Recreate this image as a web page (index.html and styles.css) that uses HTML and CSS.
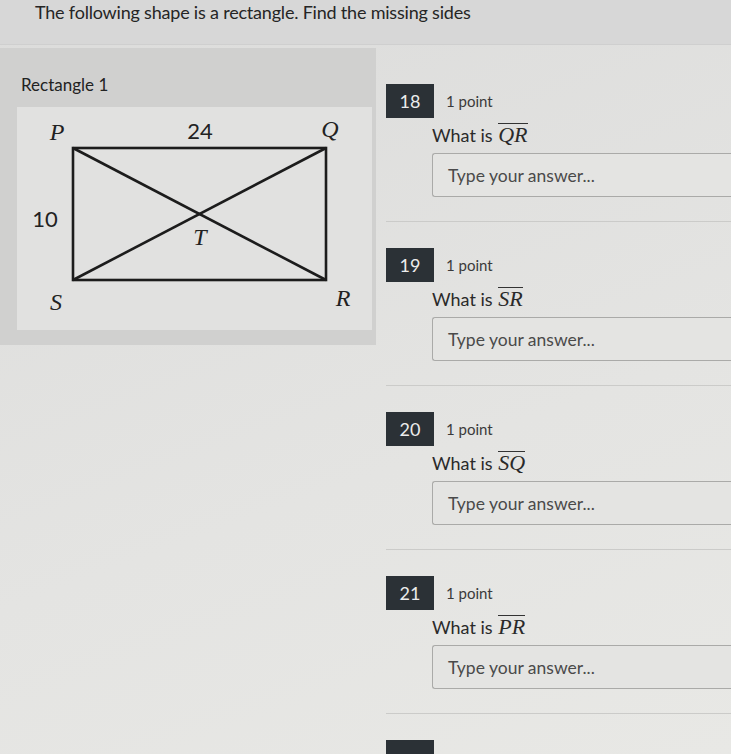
FILE: index.html
```html
<!DOCTYPE html>
<html>
<head>
<meta charset="utf-8">
<link rel="stylesheet" href="styles.css">
</head>
<body>
<header class="top">
  <p class="prompt">The following shape is a rectangle. Find the missing sides</p>
</header>
<main class="layout">
  <section class="left">
    <div class="panel">
      <h2 class="panel-title">Rectangle 1</h2>
      <div class="figure">
        <svg width="355" height="223" viewBox="0 0 355 223">
          <g stroke="#1c1c1c" stroke-width="2.6" fill="none">
            <rect x="56" y="41" width="253" height="132"/>
            <line x1="56" y1="41" x2="309" y2="173"/>
            <line x1="56" y1="173" x2="309" y2="41"/>
          </g>
          <g class="lbl-it">
            <text x="40" y="25">P</text>
            <text x="313" y="22">Q</text>
            <text x="183" y="130">T</text>
            <text x="39" y="195">S</text>
            <text x="326" y="191">R</text>
          </g>
          <g class="lbl-num">
            <text x="183" y="23">24</text>
            <text x="28" y="111">10</text>
          </g>
        </svg>
      </div>
    </div>
  </section>
  <section class="right">
    <div class="q">
      <div class="qhead"><span class="badge">18</span><span class="pts">1 point</span></div>
      <div class="qtext">What is <span class="seg">QR</span></div>
      <div class="answer">Type your answer...</div>
    </div>
    <div class="q">
      <div class="qhead"><span class="badge">19</span><span class="pts">1 point</span></div>
      <div class="qtext">What is <span class="seg">SR</span></div>
      <div class="answer">Type your answer...</div>
    </div>
    <div class="q">
      <div class="qhead"><span class="badge">20</span><span class="pts">1 point</span></div>
      <div class="qtext">What is <span class="seg">SQ</span></div>
      <div class="answer">Type your answer...</div>
    </div>
    <div class="q">
      <div class="qhead"><span class="badge">21</span><span class="pts">1 point</span></div>
      <div class="qtext">What is <span class="seg">PR</span></div>
      <div class="answer">Type your answer...</div>
    </div>
    <div class="q q-last">
      <div class="qhead"><span class="badge"></span></div>
    </div>
  </section>
</main>
</body>
</html>
```
FILE: styles.css
```css
html, body {
  margin: 0;
  padding: 0;
}
body {
  width: 731px;
  height: 754px;
  overflow: hidden;
  font-family: Lato, "Open Sans", sans-serif;
  color: #222;
  background: linear-gradient(160deg, #dcdcdb 0%, #e4e4e2 60%, #e8e8e5 100%);
}
.top {
  height: 44px;
  background: #d7d7d7;
  border-bottom: 1px solid #cfcfcf;
}
.prompt {
  margin: 0;
  padding: 0 0 0 35px;
  font-size: 18px;
  line-height: 24px;
  letter-spacing: -0.2px;
  color: #252525;
}
.layout {
  display: flex;
}
.left {
  width: 376px;
  flex: none;
  padding-top: 3px;
}
.panel {
  background: #d0d0cf;
  padding: 26px 4px 15px 17px;
  height: 256px;
}
.panel-title {
  margin: 0;
  font-size: 17px;
  font-weight: normal;
  line-height: 22px;
  color: #222;
  padding-left: 4px;
}
.figure {
  margin-top: 11px;
  width: 355px;
  height: 223px;
  background: #e1e1e0;
}
.figure svg {
  display: block;
}
.lbl-it text {
  font-family: "Liberation Serif", "DejaVu Serif", serif;
  font-style: italic;
  font-size: 24px;
  fill: #222;
  text-anchor: middle;
  dominant-baseline: central;
}
.lbl-num text {
  font-family: Lato, "Liberation Sans", sans-serif;
  font-size: 22px;
  fill: #222;
  text-anchor: middle;
  dominant-baseline: central;
}
.right {
  flex: 1;
  padding-top: 39px;
  overflow: hidden;
}
.q {
  margin-left: 10px;
  padding-bottom: 24px;
  border-bottom: 1px solid #cbcbc9;
  margin-bottom: 26px;
}
.q-last {
  border-bottom: none;
  padding-bottom: 0;
  margin-bottom: 0;
}
.qhead {
  display: flex;
  align-items: center;
  height: 34px;
}
.badge {
  width: 48px;
  height: 34px;
  background: #2b3136;
  color: #ececec;
  font-size: 18px;
  display: flex;
  align-items: center;
  justify-content: center;
}
.pts {
  margin-left: 12px;
  font-size: 15px;
  color: #3a3a3a;
}
.qtext {
  margin: 5px 0 0 46px;
  font-size: 18px;
  line-height: 24px;
  color: #2a2a2a;
}
.seg {
  font-family: "Liberation Serif", "DejaVu Serif", serif;
  font-style: italic;
  font-size: 22px;
  display: inline-block;
  line-height: 19px;
  border-top: 1.5px solid #333;
  padding-top: 1px;
  margin-left: 1px;
}
.answer {
  margin: 6px 0 0 46px;
  width: 320px;
  box-sizing: border-box;
  height: 44px;
  border: 1.5px solid #aaaaa8;
  border-right: none;
  border-radius: 3px 0 0 3px;
  background: #e4e4e2;
  padding-left: 15px;
  display: flex;
  align-items: center;
  font-size: 17.5px;
  color: #4a4a4a;
}
```
